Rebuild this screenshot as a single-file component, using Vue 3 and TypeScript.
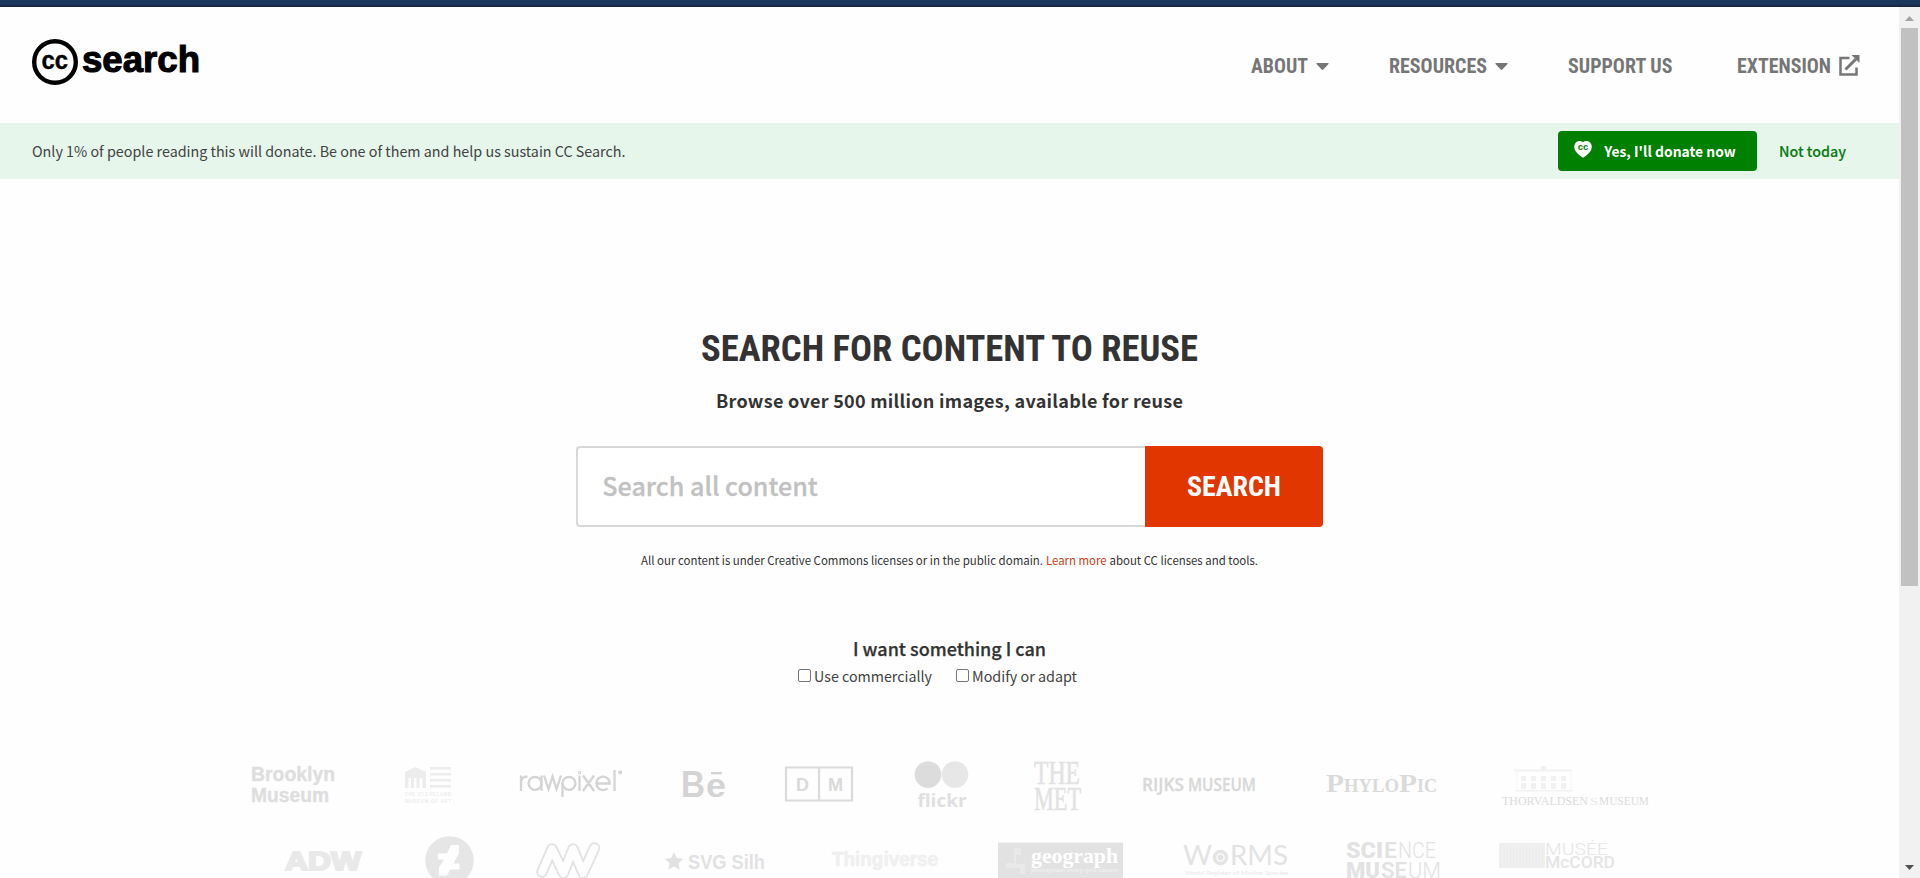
<script setup lang="ts">
interface NavItem { label: string; w: number; caret: boolean; external: boolean; cell: number }
interface License { label: string; width: number }

const nav: NavItem[] = [
  { label: 'ABOUT', w: 57, caret: true, external: false, cell: 138 },
  { label: 'RESOURCES', w: 98, caret: true, external: false, cell: 179 },
  { label: 'SUPPORT US', w: 104.5, caret: false, external: false, cell: 169 },
  { label: 'EXTENSION', w: 94, caret: false, external: true, cell: 123.5 },
]
const licenses: License[] = [
  { label: 'Use commercially', width: 118 },
  { label: 'Modify or adapt', width: 105 },
]
const facadeBays = [0, 1, 2, 3, 4]
const barcode = Array.from({ length: 14 }, (_, i) => i)
</script>

<template>
  <div class="window">
    <div class="topbar"></div>
    <div class="body">
      <div class="page">
        <header class="header">
          <svg class="brand" width="170" height="48" viewBox="0 0 170 48">
            <circle cx="23" cy="23" r="20.800" fill="none" stroke="#000" stroke-width="4.400" />
            <text class="arial" x="9.600" y="29.700" font-size="26" stroke="#000" stroke-width=".4" textLength="26.500" lengthAdjust="spacingAndGlyphs">cc</text>
            <text class="arial" x="50" y="32.700" font-size="37" stroke="#000" stroke-width="1.100" textLength="118" lengthAdjust="spacingAndGlyphs">search</text>
          </svg>
          <nav class="nav">
            <a v-for="n in nav" :key="n.label" class="nav-item" :style="{ width: n.cell + 'px' }">
              <svg :width="n.w" height="24" class="cond"><text x="0" y="19.500" font-size="19.500" :textLength="n.w" lengthAdjust="spacingAndGlyphs">{{ n.label }}</text></svg>
              <svg v-if="n.caret" class="caret" width="13" height="8" viewBox="0 0 13 8"><path d="M1 0h11q1 .2.5 1L7.300 6.600q-.8.8-1.600 0L.5 1Q0 .2 1 0z" fill="#767676" /></svg>
              <svg v-if="n.external" class="ext" width="21" height="21" viewBox="0 0 21 21" fill="none" stroke="#767676" stroke-width="2.500">
                <path d="M10.500 3H1.500v16.500h16v-7" /><path d="M6.500 14.500L17 4" stroke-width="3" /><path d="M12.500 0H20.500V8z" fill="#767676" stroke="none" />
              </svg>
            </a>
          </nav>
        </header>

        <section class="banner">
          <svg class="src" width="594" height="26"><text x="0" y="18" font-size="14.400" fill="#424242" textLength="593.500" lengthAdjust="spacingAndGlyphs">Only 1% of people reading this will donate. Be one of them and help us sustain CC Search.</text></svg>
          <div class="actions">
            <button class="donate">
              <svg class="heart" width="18" height="17" viewBox="0 0 18 17"><path d="M9 1.200C7-.4 3.500-.3 1.500 2c-2 2.500-1.500 6 .3 8.600C3.500 13 6.500 15.500 9 16.700c2.500-1.200 5.500-3.700 7.200-6.100C18 8 18.500 4.500 16.500 2 14.500-.3 11-.4 9 1.200z" fill="#fff" /><text class="arial" x="3.700" y="9.300" font-size="8.500" fill="#008000" textLength="10.600" lengthAdjust="spacingAndGlyphs">cc</text></svg>
              <svg class="src bold" width="132" height="26"><text x="-.8" y="18" font-size="14.400" fill="#fff" textLength="131.500" lengthAdjust="spacingAndGlyphs">Yes, I'll donate now</text></svg>
            </button>
            <svg class="src medium later" width="68" height="26"><text x="0" y="18" font-size="14.400" fill="#0b7a14" stroke="#0b7a14" stroke-width=".15" textLength="67" lengthAdjust="spacingAndGlyphs">Not today</text></svg>
          </div>
        </section>

        <main class="hero">
          <svg class="cond title" width="498" height="44"><text x="0" y="33" font-size="36" fill="#333" textLength="497" lengthAdjust="spacingAndGlyphs">SEARCH FOR CONTENT TO REUSE</text></svg>
          <svg class="src bold sub" width="467" height="28"><text x="0" y="20" font-size="18" textLength="467">Browse over 500 million images, available for reuse</text></svg>
          <form class="search" @submit.prevent>
            <div class="field"><svg class="src medium" width="217" height="40"><text x="-.7" y="29" font-size="25.500" fill="#c1c1c1" stroke="#c1c1c1" stroke-width=".3" textLength="215.500" lengthAdjust="spacingAndGlyphs">Search all content</text></svg></div>
            <button class="go"><svg class="cond" width="94" height="36"><text x="0" y="26.800" font-size="27" fill="#fff" textLength="94" lengthAdjust="spacingAndGlyphs">SEARCH</text></svg></button>
          </form>
          <svg class="src note" width="618" height="20">
            <text x="0" y="15" font-size="11.700" textLength="402" lengthAdjust="spacingAndGlyphs">All our content is under Creative Commons licenses or in the public domain.</text>
            <text x="405" y="15" font-size="11.700" fill="#c8401c" textLength="60.500" lengthAdjust="spacingAndGlyphs">Learn more</text>
            <text x="468.500" y="15" font-size="11.700" textLength="148.500" lengthAdjust="spacingAndGlyphs">about CC licenses and tools.</text>
          </svg>
          <svg class="src medium want" width="193" height="26"><text x="0" y="19" font-size="18" stroke="#333" stroke-width=".25" textLength="193" lengthAdjust="spacingAndGlyphs">I want something I can</text></svg>
          <div class="options">
            <label v-for="l in licenses" :key="l.label" class="option">
              <span class="box"></span>
              <svg class="src" :width="l.width" height="22"><text x="0" y="16" font-size="14.400" fill="#424242" :textLength="l.width" lengthAdjust="spacingAndGlyphs">{{ l.label }}</text></svg>
            </label>
          </div>
        </main>

        <section class="logos">
          <div class="row">
            <svg width="140" height="70" viewBox="240 750 140 70" class="arial" fill="#dedede">
              <text x="251" y="781" font-size="20" stroke="#dedede" stroke-width=".4" textLength="84" lengthAdjust="spacingAndGlyphs">Brooklyn</text>
              <text x="251" y="801.500" font-size="20" stroke="#dedede" stroke-width=".4" textLength="78" lengthAdjust="spacingAndGlyphs">Museum</text>
            </svg>
            <svg width="120" height="70" viewBox="380 750 120 70" fill="#ececec">
              <path d="M405 772l10.500-5 10.500 5v16h-3.500v-10h-3v10h-3v-10h-2.500v10h-3v-10h-2.500v10H405z" />
              <path d="M430 767h21v2.500h-21zM430 773h21v2.500h-21zM430 779h21v2.500h-21zM430 785h21v2.500h-21z" />
              <text class="arial" x="405" y="795.500" font-size="4.500" textLength="46">THE CLEVELAND</text>
              <text class="arial" x="405" y="802.500" font-size="4.500" textLength="46">MUSEUM OF ART</text>
            </svg>
            <svg width="155" height="70" viewBox="500 750 155 70" fill="none" stroke="#d4d4d4" stroke-width="2.300">
              <path d="M521 791v-15.500M521 783q0-6.500 6.500-6.500M541.500 775.500v15.500M544 775.500l4.500 13.500 4-12.500 4 12.500 4.500-13.500M562.500 797v-14M579.500 775.500v15.500M583 775.500l11 15.500M594 775.500l-11 15.500M614.500 770v21" />
              <circle cx="535" cy="783.300" r="6.500" /><circle cx="569" cy="783.300" r="6.500" />
              <path d="M596.500 783.500h13.200a6.700 6.700 0 1 0-2.200 4.800" /><circle cx="579.500" cy="772.500" r=".5" /><path d="M618.500 772.500h3.500" stroke-width="3.500" />
            </svg>
            <svg width="115" height="70" viewBox="655 750 115 70" class="arial" fill="#d4d4d4">
              <text x="681" y="797" font-size="37" textLength="24" lengthAdjust="spacingAndGlyphs">B</text><text x="706" y="797" font-size="33" textLength="20" lengthAdjust="spacingAndGlyphs">e</text><path d="M711 772h11v2.300h-11z" />
            </svg>
            <svg width="115" height="70" viewBox="770 750 115 70" class="arial" fill="#dadada">
              <path d="M786 767.500h66v33h-66zM819 767v34" fill="none" stroke="#dadada" stroke-width="2.200" />
              <text x="796" y="791" font-size="19" textLength="13" lengthAdjust="spacingAndGlyphs">D</text><text x="828" y="791" font-size="19" textLength="15" lengthAdjust="spacingAndGlyphs">M</text>
            </svg>
            <svg width="120" height="70" viewBox="885 750 120 70" fill="#e0e0e0">
              <circle cx="928" cy="774.500" r="13.300" fill="#dcdcdc" /><circle cx="955" cy="774.500" r="13.300" fill="#e7e7e7" />
              <text class="open" x="917.500" y="807" font-size="18.500" textLength="49" lengthAdjust="spacingAndGlyphs">flickr</text>
            </svg>
            <svg width="115" height="70" viewBox="1005 750 115 70" class="serif" fill="#e2e2e2" stroke="#e2e2e2" stroke-width=".5">
              <text x="1034" y="783.500" font-size="33" textLength="46" lengthAdjust="spacingAndGlyphs">THE</text><text x="1034" y="809.500" font-size="33" textLength="47" lengthAdjust="spacingAndGlyphs">MET</text>
            </svg>
            <svg width="180" height="70" viewBox="1120 750 180 70" class="open semi" fill="#d8d8d8" stroke="#d8d8d8" stroke-width=".3">
              <text x="1142" y="790.500" font-size="18.500" textLength="42" lengthAdjust="spacingAndGlyphs">RIJKS</text><text x="1188" y="790.500" font-size="18.500" textLength="68" lengthAdjust="spacingAndGlyphs">MUSEUM</text>
            </svg>
            <svg width="180" height="70" viewBox="1300 750 180 70" class="serif strong" fill="#dadada">
              <text x="1326" y="792" font-size="26" textLength="18" lengthAdjust="spacingAndGlyphs">P</text><text x="1344" y="792" font-size="19" textLength="55" lengthAdjust="spacingAndGlyphs">HYLO</text>
              <text x="1399" y="792" font-size="26" textLength="18" lengthAdjust="spacingAndGlyphs">P</text><text x="1417" y="792" font-size="19" textLength="20" lengthAdjust="spacingAndGlyphs">IC</text>
            </svg>
            <svg width="190" height="70" viewBox="1480 750 190 70" fill="#f1f1f1">
              <path d="M1514 769.500h58v2h-58zM1516 790h56v1.500h-56zM1541 766h5v4h-5z" />
              <path d="M1517 772v18M1571 772v18" stroke="#f5f5f5" />
              <path v-for="b in facadeBays" :key="b" :transform="`translate(${b * 10} 0)`" d="M1521 776h5v5h-5zM1521 783h5v6h-5z" />
              <text class="serif" fill="#dcdcdc" x="1502" y="805" font-size="12" textLength="86" lengthAdjust="spacingAndGlyphs">THORVALDSEN</text>
              <text class="serif" fill="#e8e8e8" x="1590" y="805" font-size="11" textLength="8" lengthAdjust="spacingAndGlyphs">S</text>
              <text class="serif" fill="#dcdcdc" x="1599" y="805" font-size="12" textLength="50" lengthAdjust="spacingAndGlyphs">MUSEUM</text>
            </svg>
          </div>
          <div class="row second">
            <svg width="160" height="48" viewBox="240 830 160 48" fill="#e9e9e9"><text class="arial" stroke="#e9e9e9" stroke-width="2" x="285" y="869.500" font-size="26" textLength="76" lengthAdjust="spacingAndGlyphs">ADW</text></svg>
            <svg width="110" height="48" viewBox="400 830 110 48"><circle cx="449.500" cy="860.500" r="24.300" fill="#e6e6e6" /><path d="M451 845h8v8l-5.500 10.500h6v6h-9.500l-3 6h-8v-8l5-8h-6v-6h9z" fill="#fff" /></svg>
            <svg width="130" height="48" viewBox="510 830 130 48" fill="none" stroke-linecap="round" stroke-linejoin="round">
              <path d="M542 872L552 849 563.500 873 573 849 583 873 594.500 848" stroke="#e2e2e2" stroke-width="11.500" />
              <path d="M542 872L552 849 563.500 873 573 849 583 873 594.500 848" stroke="#fefefe" stroke-width="7.800" />
            </svg>
            <svg width="160" height="48" viewBox="640 830 160 48" fill="#e2e2e2"><path d="M674 852l2.800 6 6.500.8-4.800 4.500 1.300 6.500-5.800-3.200-5.800 3.200 1.300-6.500-4.800-4.500 6.500-.8z" /><text class="arial" x="688" y="869" font-size="19.500" textLength="77" lengthAdjust="spacingAndGlyphs">SVG Silh</text></svg>
            <svg width="170" height="48" viewBox="800 830 170 48" fill="#f0f0f0"><text class="arial" x="832" y="865.500" font-size="19.500" stroke="#f0f0f0" stroke-width=".7" textLength="106" lengthAdjust="spacingAndGlyphs">Thingiverse</text></svg>
            <svg width="180" height="48" viewBox="970 830 180 48"><path d="M998 842.500h125V878H998z" fill="#e2e2e2" /><path d="M1014 848h7v7h-5v9h9v10h-5v-6h-14v-5h8z" fill="#e9e9e9" /><text class="serif strong" x="1031" y="862.500" font-size="21.500" fill="#fff" textLength="87" lengthAdjust="spacingAndGlyphs">geograph</text><text class="arial" x="1031" y="872" font-size="4.500" fill="#efefef" textLength="87" lengthAdjust="spacingAndGlyphs">photograph every grid square</text></svg>
            <svg width="170" height="48" viewBox="1150 830 170 48" fill="#e3e3e3"><text class="lato" x="1183" y="865" font-size="27" textLength="29" lengthAdjust="spacingAndGlyphs">W</text><circle cx="1220.500" cy="857.500" r="6" fill="none" stroke="#e4e4e4" stroke-width="3.500" /><circle cx="1220.500" cy="857.500" r="3" /><text class="lato" x="1230" y="865" font-size="27" textLength="58" lengthAdjust="spacingAndGlyphs">RMS</text><text class="lato" x="1185" y="874.500" font-size="6.500" fill="#e9e9e9" textLength="103" lengthAdjust="spacingAndGlyphs">World Register of Marine Species</text></svg>
            <svg width="160" height="48" viewBox="1320 830 160 48" fill="#e2e2e2" class="robo"><text class="heavy" x="1346" y="858" font-size="22" textLength="37" lengthAdjust="spacingAndGlyphs">SCI</text><text x="1384" y="858" font-size="22" textLength="13" lengthAdjust="spacingAndGlyphs" font-weight="600">E</text><text x="1398" y="858" font-size="22" font-weight="300" textLength="38" lengthAdjust="spacingAndGlyphs">NCE</text><text class="heavy" x="1346" y="878" font-size="22" textLength="34" lengthAdjust="spacingAndGlyphs">MU</text><text x="1381" y="878" font-size="22" font-weight="600" textLength="26" lengthAdjust="spacingAndGlyphs">SE</text><text x="1408" y="878" font-size="22" font-weight="300" textLength="33" lengthAdjust="spacingAndGlyphs">UM</text></svg>
            <svg width="190" height="48" viewBox="1480 830 190 48" fill="#e5e5e5"><path d="M1499 843h46v25h-46z" fill="#f0f0f0" /><path v-for="i in barcode" :key="i" :d="`M${1501 + i * 3.2} 843v25`" stroke="#ebebeb" /><text class="robo" x="1545" y="854.500" font-size="16.500" font-weight="300" textLength="63" lengthAdjust="spacingAndGlyphs">MUSÉE</text><text class="robo" x="1545" y="868" font-size="17" font-weight="500" textLength="70" lengthAdjust="spacingAndGlyphs">McCORD</text></svg>
          </div>
        </section>
      </div>
      <div class="scrollbar">
        <svg class="arrow" width="21" height="21"><path d="M6 14l4.500-5 4.500 5z" fill="#a3a3a3" /></svg>
        <div class="thumb"></div>
        <svg class="arrow bottom" width="21" height="21"><path d="M6 8h9l-4.500 5z" fill="#505050" /></svg>
      </div>
    </div>
  </div>
</template>

<style>
body { margin: 0; overflow: hidden; }
</style>

<style scoped>
.window { width: 1920px; height: 878px; overflow: hidden; background: #fefefe; display: flex; flex-direction: column; }
.topbar { height: 5px; background: #1b365d; border-bottom: 2px solid #182840; flex: none; }
.body { display: flex; flex: 1; }
.page { width: 1899px; height: 871px; overflow: hidden; }
svg { display: block; flex: none; overflow: visible; }
button { border: 0; padding: 0; font: inherit; }
.src { font-family: "Source Sans Pro", "Noto Sans CJK SC", sans-serif; fill: #333; font-weight: 400; }
.src.medium { font-weight: 500; }
.src.bold { font-weight: 700; }
.cond { font-family: "Roboto Condensed", Roboto, sans-serif; font-stretch: 75%; font-weight: 700; fill: #767676; }
.arial { font-family: "Liberation Sans", Arial, sans-serif; font-weight: 700; }
.heavy { font-weight: 900; }
.open { font-family: "Open Sans", sans-serif; font-weight: 700; }
.semi { font-weight: 600; }
.serif { font-family: "Liberation Serif", serif; }
.strong { font-weight: 700; }
.lato { font-family: Lato, sans-serif; }
.robo { font-family: Roboto, sans-serif; }
.header { height: 116px; display: flex; justify-content: space-between; align-items: flex-start; }
.brand { margin: 32px 0 0 32px; }
.nav { display: flex; padding-top: 46px; margin-right: 38.5px; }
.nav-item { display: flex; align-items: flex-start; }
.caret { margin: 10px 0 0 8px; }
.ext { margin: 2px 0 0 8px; }
.banner { height: 56px; background: #e6f6eb; display: flex; align-items: center; justify-content: space-between; padding: 0 52px 0 32px; box-sizing: border-box; }
.banner > .src { margin-top: 2px; }
.actions { display: flex; align-items: center; }
.donate { width: 199px; height: 40px; border-radius: 4px; background: #008000; display: flex; align-items: center; padding-left: 16px; gap: 13px; box-sizing: border-box; }
.heart { margin-top: -3px; }
.donate .src { margin-top: 2px; }
.later { margin: 2px 0 0 22px; }
.hero { height: 571px; display: flex; flex-direction: column; align-items: center; box-sizing: border-box; padding-top: 149px; }
.sub { margin-top: 16px; }
.search { display: flex; width: 747px; height: 81px; margin-top: 30px; }
.field { width: 569px; box-sizing: border-box; border: 2px solid #d8d8d8; border-right: 0; border-radius: 4px 0 0 4px; padding: 19px 0 0 24.5px; background: #fff; }
.go { width: 178px; background: #e23600; border-radius: 0 4px 4px 0; display: flex; align-items: center; justify-content: center; }
.note { margin-top: 23px; }
.want { margin-top: 67px; }
.options { display: flex; gap: 24px; margin: 3px 24px 0 0; }
.option { display: flex; align-items: flex-start; gap: 3px; }
.box { width: 13px; height: 13px; margin-top: 3px; border: 1px solid #767676; border-radius: 2px; box-sizing: border-box; background: #fff; }
.logos { padding-left: 240px; }
.row { display: flex; height: 70px; }
.second { height: 48px; margin-top: 10px; overflow: hidden; }
.scrollbar { width: 21px; height: 871px; background: #f1f1f1; display: flex; flex-direction: column; }
.thumb { height: 558px; margin: 0 2px; background: #c1c1c1; }
.bottom { margin-top: auto; margin-bottom: 0; }
</style>
